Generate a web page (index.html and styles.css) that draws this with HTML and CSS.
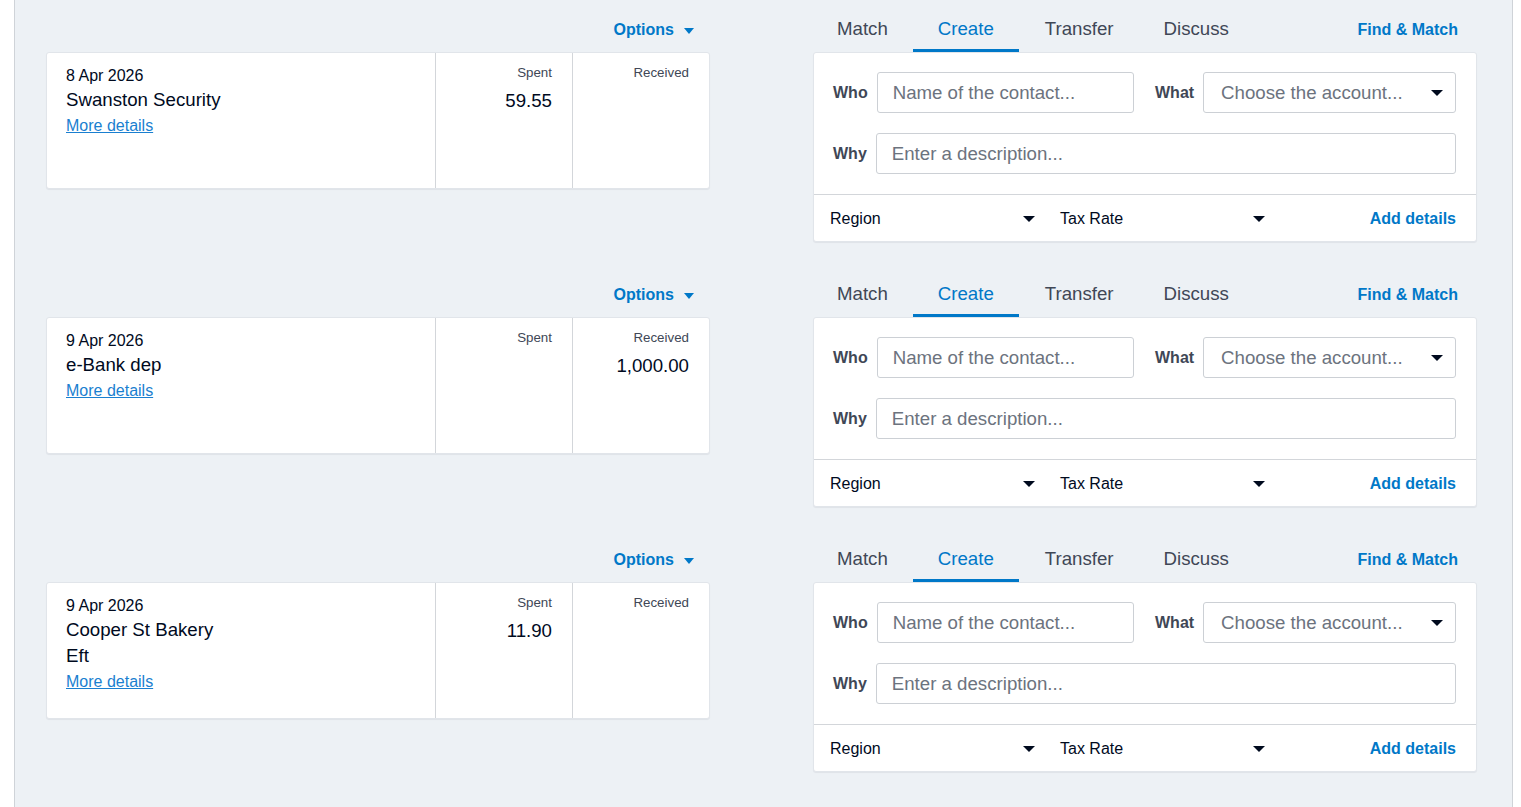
FILE: index.html
```html
<!DOCTYPE html>
<html lang="en">
<head>
<meta charset="utf-8" />
<title>Bank reconciliation</title>
<link rel="stylesheet" href="styles.css">
</head>
<body>

<main class="recon">

	<section class="line">
		<div class="statement">
			<div class="bar">
				<a class="options">Options <span class="caret"></span></a>
			</div>
			<div class="card">
				<div class="desc">
					<div class="date">8 Apr 2026</div>
					<div class="payee">Swanston Security</div>
					<a class="more">More details</a>
				</div>
				<div class="amt">
					<div class="cap">Spent</div>
					<div class="num">59.55</div>
				</div>
				<div class="amt">
					<div class="cap">Received</div>
				</div>
			</div>
		</div>
		<div class="match">
			<div class="bar tabs">
				<a class="tab">Match</a>
				<a class="tab on">Create</a>
				<a class="tab">Transfer</a>
				<a class="tab">Discuss</a>
				<a class="find">Find &amp; Match</a>
			</div>
			<div class="card form">
				<div class="fields">
					<div class="row">
						<label class="field"><b>Who</b><span class="input">Name of the contact...</span></label>
						<label class="field"><b>What</b><span class="input select">Choose the account... <span class="caret dark"></span></span></label>
					</div>
					<div class="row">
						<label class="field"><b>Why</b><span class="input">Enter a description...</span></label>
					</div>
				</div>
				<div class="foot">
					<span class="dd">Region <span class="caret dark"></span></span>
					<span class="dd">Tax Rate <span class="caret dark"></span></span>
					<a class="add">Add details</a>
				</div>
			</div>
		</div>
	</section>

	<section class="line">
		<div class="statement">
			<div class="bar">
				<a class="options">Options <span class="caret"></span></a>
			</div>
			<div class="card">
				<div class="desc">
					<div class="date">9 Apr 2026</div>
					<div class="payee">e-Bank dep</div>
					<a class="more">More details</a>
				</div>
				<div class="amt">
					<div class="cap">Spent</div>
				</div>
				<div class="amt">
					<div class="cap">Received</div>
					<div class="num">1,000.00</div>
				</div>
			</div>
		</div>
		<div class="match">
			<div class="bar tabs">
				<a class="tab">Match</a>
				<a class="tab on">Create</a>
				<a class="tab">Transfer</a>
				<a class="tab">Discuss</a>
				<a class="find">Find &amp; Match</a>
			</div>
			<div class="card form">
				<div class="fields">
					<div class="row">
						<label class="field"><b>Who</b><span class="input">Name of the contact...</span></label>
						<label class="field"><b>What</b><span class="input select">Choose the account... <span class="caret dark"></span></span></label>
					</div>
					<div class="row">
						<label class="field"><b>Why</b><span class="input">Enter a description...</span></label>
					</div>
				</div>
				<div class="foot">
					<span class="dd">Region <span class="caret dark"></span></span>
					<span class="dd">Tax Rate <span class="caret dark"></span></span>
					<a class="add">Add details</a>
				</div>
			</div>
		</div>
	</section>

	<section class="line">
		<div class="statement">
			<div class="bar">
				<a class="options">Options <span class="caret"></span></a>
			</div>
			<div class="card">
				<div class="desc">
					<div class="date">9 Apr 2026</div>
					<div class="payee">Cooper St Bakery</div>
					<div class="payee">Eft</div>
					<a class="more">More details</a>
				</div>
				<div class="amt">
					<div class="cap">Spent</div>
					<div class="num">11.90</div>
				</div>
				<div class="amt">
					<div class="cap">Received</div>
				</div>
			</div>
		</div>
		<div class="match">
			<div class="bar tabs">
				<a class="tab">Match</a>
				<a class="tab on">Create</a>
				<a class="tab">Transfer</a>
				<a class="tab">Discuss</a>
				<a class="find">Find &amp; Match</a>
			</div>
			<div class="card form">
				<div class="fields">
					<div class="row">
						<label class="field"><b>Who</b><span class="input">Name of the contact...</span></label>
						<label class="field"><b>What</b><span class="input select">Choose the account... <span class="caret dark"></span></span></label>
					</div>
					<div class="row">
						<label class="field"><b>Why</b><span class="input">Enter a description...</span></label>
					</div>
				</div>
				<div class="foot">
					<span class="dd">Region <span class="caret dark"></span></span>
					<span class="dd">Tax Rate <span class="caret dark"></span></span>
					<a class="add">Add details</a>
				</div>
			</div>
		</div>
	</section>

</main>

</body>
</html>
```

FILE: styles.css
```css
body {
	margin: 0;
	background: #fff;
	font: 16px "Liberation Sans", Arial, sans-serif;
	color: #000a1e;
}

main.recon {
	margin-left: 14px;
	width: 1499px;
	min-height: 807px;
	box-sizing: border-box;
	padding: 7px 36px 0 31px;
	background: #edf1f5;
	border-left: 1px solid #cfd3d8;
	border-right: 1px solid #cfd3d8;
}

/* --------------------------------- */

.line {
	display: grid;
	grid-template-columns: 664px 664px;
	column-gap: 103px;
	margin-bottom: 30px;
	align-items: start;
}

.bar {
	display: flex;
	align-items: center;
	height: 45px;
}

.card {
	background: #fff;
	border: 1px solid #e1e5ea;
	border-radius: 3px;
	box-shadow: 0 1px 1px rgba(0,10,30,0.06);
	box-sizing: border-box;
}

.caret {
	display: inline-block;
	width: 0;
	height: 0;
	border-left: 6px solid transparent;
	border-right: 6px solid transparent;
	border-top: 6px solid #0078c8;
}
.caret.dark {border-top-color: #000a1e;}

/* --------------------------------- */

.statement .bar {
	justify-content: flex-end;
	padding-right: 16px;
}
.options {
	display: flex;
	align-items: center;
	gap: 10px;
	padding-top: 1px;
	font-weight: bold;
	color: #0078c8;
}
.options .caret {
	border-left-width: 5.5px;
	border-right-width: 5.5px;
	margin-top: 1px;
}

.statement .card {
	display: grid;
	grid-template-columns: 388px 137px 1fr;
	min-height: 137px;
}
.desc {
	padding: 12px 20px 10px 19px;
}
.date {line-height: 22px;}
.payee {
	font-size: 18.67px;
	line-height: 26px;
}
.more {
	display: block;
	line-height: 26px;
	color: #1a7fd0;
	text-decoration: underline;
}

.amt {
	border-left: 1px solid #d3d6da;
	padding: 11px 20px 0 0;
	text-align: right;
}
.cap {
	font-size: 13.33px;
	line-height: 18px;
	color: #404756;
}
.num {
	margin-top: 6px;
	font-size: 18.67px;
	line-height: 26px;
}

/* --------------------------------- */

.tabs {
	padding-right: 19px;
	font-size: 18.67px;
}
.tab {
	display: flex;
	align-items: center;
	box-sizing: border-box;
	height: 45px;
	padding: 1px 25px 0;
	color: #404756;
	border-bottom: 3px solid transparent;
}
.tab:first-child {padding-left: 24px;}
.tab:nth-child(3) {padding-left: 26px;}
.tab.on {
	color: #0078c8;
	border-bottom-color: #0078c8;
}
.find {
	margin-left: auto;
	font-size: 16px;
	font-weight: bold;
	color: #0078c8;
}

.form .fields {
	display: flex;
	flex-direction: column;
	gap: 20px;
	padding: 19px 20px 20px 19px;
	border-bottom: 1px solid #d3d6da;
}
.row {
	display: flex;
	gap: 21px;
}
.field {
	flex: 1;
	display: flex;
	align-items: center;
	gap: 9px;
}
.field b {color: #404756;}
.input {
	flex: 1;
	display: flex;
	align-items: center;
	height: 41px;
	box-sizing: border-box;
	padding: 0 12px 0 15px;
	border: 1px solid #ccd0d5;
	border-radius: 3px;
	font-size: 18.67px;
	color: #6c737e;
	white-space: nowrap;
}
.input.select {
	justify-content: space-between;
	padding-left: 17px;
}

.foot {
	display: flex;
	align-items: center;
	height: 45px;
	padding: 1px 20px 0 16px;
}
.dd {
	display: flex;
	align-items: center;
	justify-content: space-between;
	width: 205px;
	margin-right: 25px;
}
.add {
	margin-left: auto;
	font-weight: bold;
	color: #0078c8;
}
```
